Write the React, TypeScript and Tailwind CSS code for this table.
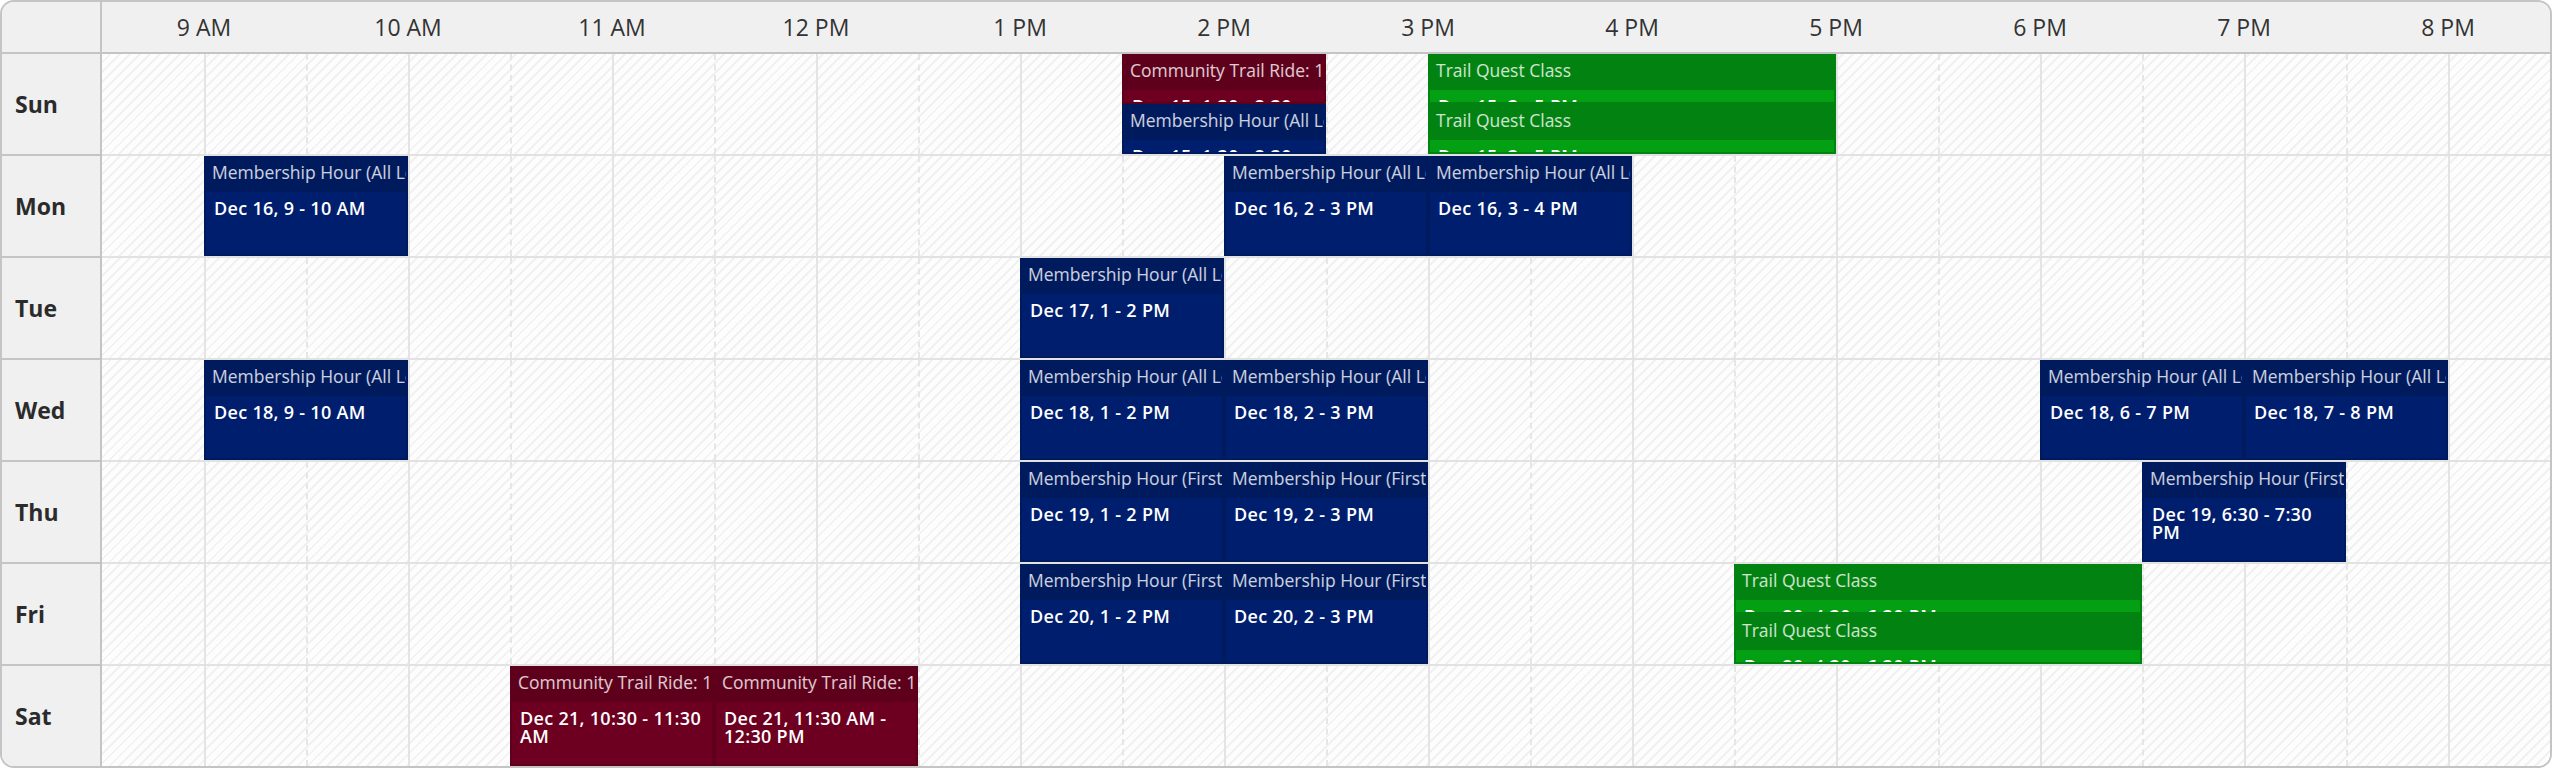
import React from "react";

type Color = "navy" | "maroon" | "green";

interface Ev {
  lane: number;
  start: number;
  span: number;
  title: string;
  date: string;
  color: Color;
  stacked?: boolean;
}

interface Day {
  name: string;
  events: Ev[];
}

const OUTER: Record<Color, string> = {
  navy: "bg-[#001a5e]",
  maroon: "bg-[#5e001b]",
  green: "bg-[#028210]",
};
const INNER: Record<Color, string> = {
  navy: "bg-[#001e6e]",
  maroon: "bg-[#6d0020]",
  green: "bg-[#03a013]",
};

const MH_ALL = "Membership Hour (All Levels)";
const MH_FIRST = "Membership Hour (First Timers)";
const CTR = "Community Trail Ride: 1 Hour";
const TQ = "Trail Quest Class";

const days: Day[] = [
  {
    name: "Sun",
    events: [
      { lane: 0, start: 10, span: 2, title: CTR, date: "Dec 15, 1:30 - 2:30 PM", color: "maroon", stacked: true },
      { lane: 1, start: 10, span: 2, title: MH_ALL, date: "Dec 15, 1:30 - 2:30 PM", color: "navy", stacked: true },
      { lane: 0, start: 13, span: 4, title: TQ, date: "Dec 15, 3 - 5 PM", color: "green", stacked: true },
      { lane: 1, start: 13, span: 4, title: TQ, date: "Dec 15, 3 - 5 PM", color: "green", stacked: true },
    ],
  },
  {
    name: "Mon",
    events: [
      { lane: 0, start: 1, span: 2, title: MH_ALL, date: "Dec 16, 9 - 10 AM", color: "navy" },
      { lane: 0, start: 11, span: 2, title: MH_ALL, date: "Dec 16, 2 - 3 PM", color: "navy" },
      { lane: 0, start: 13, span: 2, title: MH_ALL, date: "Dec 16, 3 - 4 PM", color: "navy" },
    ],
  },
  {
    name: "Tue",
    events: [{ lane: 0, start: 9, span: 2, title: MH_ALL, date: "Dec 17, 1 - 2 PM", color: "navy" }],
  },
  {
    name: "Wed",
    events: [
      { lane: 0, start: 1, span: 2, title: MH_ALL, date: "Dec 18, 9 - 10 AM", color: "navy" },
      { lane: 0, start: 9, span: 2, title: MH_ALL, date: "Dec 18, 1 - 2 PM", color: "navy" },
      { lane: 0, start: 11, span: 2, title: MH_ALL, date: "Dec 18, 2 - 3 PM", color: "navy" },
      { lane: 0, start: 19, span: 2, title: MH_ALL, date: "Dec 18, 6 - 7 PM", color: "navy" },
      { lane: 0, start: 21, span: 2, title: MH_ALL, date: "Dec 18, 7 - 8 PM", color: "navy" },
    ],
  },
  {
    name: "Thu",
    events: [
      { lane: 0, start: 9, span: 2, title: MH_FIRST, date: "Dec 19, 1 - 2 PM", color: "navy" },
      { lane: 0, start: 11, span: 2, title: MH_FIRST, date: "Dec 19, 2 - 3 PM", color: "navy" },
      { lane: 0, start: 20, span: 2, title: MH_FIRST, date: "Dec 19, 6:30 - 7:30 PM", color: "navy" },
    ],
  },
  {
    name: "Fri",
    events: [
      { lane: 0, start: 9, span: 2, title: MH_FIRST, date: "Dec 20, 1 - 2 PM", color: "navy" },
      { lane: 0, start: 11, span: 2, title: MH_FIRST, date: "Dec 20, 2 - 3 PM", color: "navy" },
      { lane: 0, start: 16, span: 4, title: TQ, date: "Dec 20, 4:30 - 6:30 PM", color: "green", stacked: true },
      { lane: 1, start: 16, span: 4, title: TQ, date: "Dec 20, 4:30 - 6:30 PM", color: "green", stacked: true },
    ],
  },
  {
    name: "Sat",
    events: [
      { lane: 0, start: 4, span: 2, title: CTR, date: "Dec 21, 10:30 - 11:30 AM", color: "maroon" },
      { lane: 0, start: 6, span: 2, title: CTR, date: "Dec 21, 11:30 AM - 12:30 PM", color: "maroon" },
    ],
  },
];

const hours = ["9 AM", "10 AM", "11 AM", "12 PM", "1 PM", "2 PM", "3 PM", "4 PM", "5 PM", "6 PM", "7 PM", "8 PM"];
const slots = Array.from({ length: 24 }, (_, i) => i);

function EventBox({ ev }: { ev: Ev }) {
  return (
    <div
      className={`relative z-10 flex min-w-0 flex-col overflow-hidden px-[2px] pb-[2px] ${OUTER[ev.color]}`}
      style={{ gridColumn: `${ev.start + 1} / span ${ev.span}`, gridRow: ev.stacked ? `${ev.lane + 1}` : "1 / -1" }}
    >
      <div className="flex h-[36px] shrink-0 items-center overflow-hidden whitespace-nowrap px-[6px] pb-[4px] text-[17.5px] text-white/80">
        {ev.title}
      </div>
      <div
        className={`min-h-0 flex-1 overflow-hidden px-2 pt-[7px] text-[18px] font-semibold leading-[18px] tracking-[0.3px] text-white ${INNER[ev.color]}`}
      >
        {ev.date}
      </div>
    </div>
  );
}

function DayRow({ day, last }: { day: Day; last: boolean }) {
  return (
    <div className="flex h-[102px] last:h-[100px]">
      <div
        className={`flex w-[100px] shrink-0 items-center border-r-2 border-[#c4c4c4] bg-[#f0f0f0] pl-[13px] text-[23px] font-bold text-[#2b2b2b] ${
          last ? "" : "border-b-2"
        }`}
      >
        {day.name}
      </div>
      <div
        className={`grid flex-1 grid-cols-[repeat(24,minmax(0,1fr))] grid-rows-2 bg-[image:repeating-linear-gradient(135deg,#fdfdfd_0px,#fdfdfd_5px,#f1f1f1_5px,#f1f1f1_7px)] ${
          last ? "" : "border-b-2 border-[#e2e2e2]"
        }`}
      >
        {slots.map((i) => (
          <div
            key={i}
            className={
              i === 0
                ? ""
                : i % 2 === 1
                ? "border-l-2 border-solid border-[#e4e4e4]"
                : "border-l-2 border-dashed border-[#e6e6e6]"
            }
            style={{ gridColumn: `${i + 1}`, gridRow: "1 / -1" }}
          />
        ))}
        {day.events.map((ev, k) => (
          <EventBox key={k} ev={ev} />
        ))}
      </div>
    </div>
  );
}

export default function App() {
  return (
    <div className="h-[768px] w-[2552px] bg-white" style={{ fontFamily: "'Open Sans', Lato, sans-serif" }}>
      <div className="flex h-full w-full flex-col overflow-hidden rounded-[14px] border-2 border-[#c4c4c4]">
        <div className="flex h-[52px] shrink-0 border-b-2 border-[#c4c4c4] bg-[#f0f0f0]">
          <div className="w-[100px] shrink-0 border-r-2 border-[#c4c4c4]" />
          <div className="grid flex-1 grid-cols-12">
            {hours.map((h) => (
              <div key={h} className="flex items-center justify-center text-[23px] text-[#333333]">
                {h}
              </div>
            ))}
          </div>
        </div>
        {days.map((d, i) => (
          <DayRow key={d.name} day={d} last={i === days.length - 1} />
        ))}
      </div>
    </div>
  );
}
